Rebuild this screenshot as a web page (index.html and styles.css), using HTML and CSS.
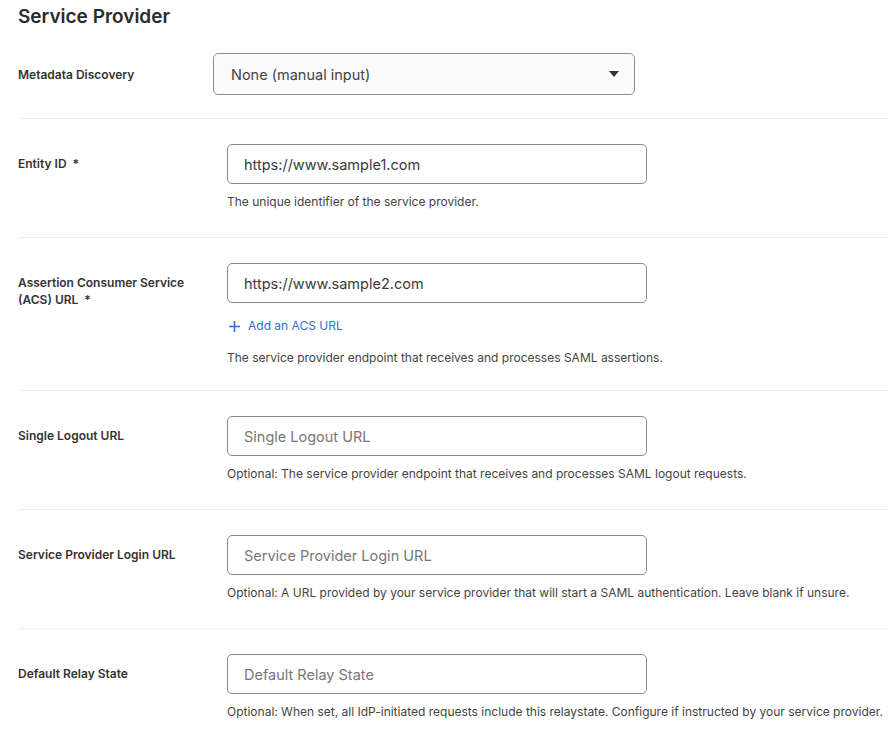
FILE: index.html
```html
<!DOCTYPE html>
<html>
<head>
    <title>Service Provider</title>
    <link rel="stylesheet" href="styles.css">
</head>
<body>
    <h1 class="page-title">Service Provider</h1>

    <div class="form-row first">
        <label class="field-label">Metadata Discovery</label>
        <div class="field">
            <div class="select">
                <span>None (manual input)</span>
                <svg class="caret" width="10" height="6" viewBox="0 0 10 6"><path d="M0 0h10L5 6z" fill="#333"/></svg>
            </div>
        </div>
    </div>

    <div class="form-row">
        <label class="field-label">Entity ID&nbsp; *</label>
        <div class="field">
            <input class="text-input" type="text" value="https://www.sample1.com">
            <p class="help">The unique identifier of the service provider.</p>
        </div>
    </div>

    <div class="form-row acs">
        <label class="field-label">Assertion Consumer Service (ACS) URL&nbsp; *</label>
        <div class="field">
            <input class="text-input" type="text" value="https://www.sample2.com">
            <a class="add-link" href="#">
                <svg width="11" height="11" viewBox="0 0 11 11"><path d="M5.5 0v11M0 5.5h11" stroke="#2f6fd0" stroke-width="1.6"/></svg>
                Add an ACS URL
            </a>
            <p class="help tight">The service provider endpoint that receives and processes SAML assertions.</p>
        </div>
    </div>

    <div class="form-row">
        <label class="field-label">Single Logout URL</label>
        <div class="field">
            <input class="text-input" type="text" placeholder="Single Logout URL">
            <p class="help">Optional: The service provider endpoint that receives and processes SAML logout requests.</p>
        </div>
    </div>

    <div class="form-row">
        <label class="field-label">Service Provider Login URL</label>
        <div class="field">
            <input class="text-input" type="text" placeholder="Service Provider Login URL">
            <p class="help">Optional: A URL provided by your service provider that will start a SAML authentication. Leave blank if unsure.</p>
        </div>
    </div>

    <div class="form-row last">
        <label class="field-label">Default Relay State</label>
        <div class="field">
            <input class="text-input" type="text" placeholder="Default Relay State">
            <p class="help">Optional: When set, all IdP-initiated requests include this relaystate. Configure if instructed by your service provider.</p>
        </div>
    </div>
</body>
</html>
```

FILE: styles.css
```css
body {
    margin: 0;
    padding: 5px 0 0 18px;
    font-family: Inter, "Liberation Sans", sans-serif;
    color: #333;
    background: #fff;
    overflow: hidden;
}
.page-title {
    margin: 0;
    font-size: 19px;
    line-height: 24px;
    font-weight: 600;
    color: #2b2b2b;
}
.form-row {
    display: grid;
    grid-template-columns: 209px 420px;
    padding: 25px 0 27px;
    border-bottom: 1px solid #eeeeee;
}
.form-row.first {
    grid-template-columns: 195px 422px;
    padding: 24px 0 23px;
}
.form-row.acs {
    padding-bottom: 24px;
}
.form-row.last {
    border-bottom: none;
}
.field-label {
    padding: 11px 20px 0 0;
    font-size: 12px;
    line-height: 17px;
    font-weight: 600;
    color: #333;
}
.form-row.first .field-label {
    padding-top: 13px;
}
.select {
    display: flex;
    align-items: center;
    justify-content: space-between;
    height: 42px;
    box-sizing: border-box;
    padding: 0 15px 0 17px;
    border: 1px solid #8f8f8f;
    border-radius: 5px;
    background: #fbfbfb;
    font-size: 14.5px;
    color: #444;
}
.text-input {
    display: block;
    width: 100%;
    height: 40px;
    box-sizing: border-box;
    padding: 0 16px;
    border: 1px solid #8c8c8c;
    border-radius: 5px;
    font-family: inherit;
    font-size: 14.5px;
    color: #3a3a3a;
    outline: none;
}
.text-input::placeholder {
    color: #777;
}
.help {
    margin: 10px 0 0;
    font-size: 12px;
    line-height: 16px;
    color: #444;
    white-space: nowrap;
}
.help.tight {
    margin-top: 16px;
}
.add-link {
    display: flex;
    align-items: center;
    gap: 8px;
    margin: 15px 0 0 2px;
    font-size: 12px;
    line-height: 16px;
    color: #2f6fd0;
    text-decoration: none;
}
```
